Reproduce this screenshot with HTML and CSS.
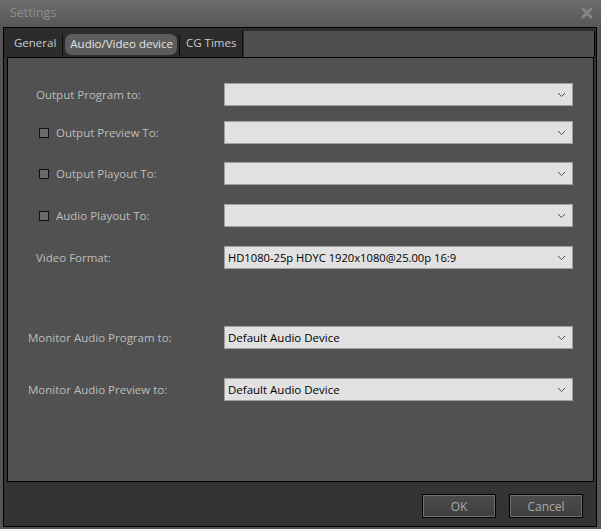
FILE: index.html
```html
<!DOCTYPE html>
<html>
<head>
<meta charset="utf-8">
<link rel="stylesheet" href="styles.css">
</head>
<body>
<div class="window">
  <div class="titlebar">
    <span class="title">Settings</span>
    <svg class="close" width="12" height="12" viewBox="0 0 12 12"><path d="M2 2 L10 10 M10 2 L2 10" stroke="#858585" stroke-width="3" stroke-linecap="round"/></svg>
  </div>
  <div class="client">
    <div class="tabbar">
      <div class="tabs">
        <div class="tab">General</div>
        <div class="sep"></div>
        <div class="tab active">Audio/Video device</div>
        <div class="sep"></div>
        <div class="tab">CG Times</div>
        <div class="sep"></div>
      </div>
      <div class="filler"></div>
    </div>
    <div class="panel">
      <div class="row">
        <div class="label">Output Program to:</div>
        <div class="select"><span></span><svg class="chev" width="9" height="6" viewBox="0 0 9 6"><path d="M1 1 L4.5 4.5 L8 1" fill="none" stroke="#505050" stroke-width="1"/></svg></div>
      </div>
      <div class="row">
        <div class="label check"><span class="box"></span>Output Preview To:</div>
        <div class="select"><span></span><svg class="chev" width="9" height="6" viewBox="0 0 9 6"><path d="M1 1 L4.5 4.5 L8 1" fill="none" stroke="#505050" stroke-width="1"/></svg></div>
      </div>
      <div class="row">
        <div class="label check"><span class="box"></span>Output Playout To:</div>
        <div class="select"><span></span><svg class="chev" width="9" height="6" viewBox="0 0 9 6"><path d="M1 1 L4.5 4.5 L8 1" fill="none" stroke="#505050" stroke-width="1"/></svg></div>
      </div>
      <div class="row">
        <div class="label check"><span class="box"></span>Audio Playout To:</div>
        <div class="select"><span></span><svg class="chev" width="9" height="6" viewBox="0 0 9 6"><path d="M1 1 L4.5 4.5 L8 1" fill="none" stroke="#505050" stroke-width="1"/></svg></div>
      </div>
      <div class="row">
        <div class="label">Video Format:</div>
        <div class="select"><span class="narrow">HD1080-25p HDYC 1920x1080@25.00p 16:9</span><svg class="chev" width="9" height="6" viewBox="0 0 9 6"><path d="M1 1 L4.5 4.5 L8 1" fill="none" stroke="#505050" stroke-width="1"/></svg></div>
      </div>
      <div class="row">
        <div class="label wide">Monitor Audio Program to:</div>
        <div class="select"><span>Default Audio Device</span><svg class="chev" width="9" height="6" viewBox="0 0 9 6"><path d="M1 1 L4.5 4.5 L8 1" fill="none" stroke="#505050" stroke-width="1"/></svg></div>
      </div>
      <div class="row">
        <div class="label wide">Monitor Audio Preview to:</div>
        <div class="select"><span>Default Audio Device</span><svg class="chev" width="9" height="6" viewBox="0 0 9 6"><path d="M1 1 L4.5 4.5 L8 1" fill="none" stroke="#505050" stroke-width="1"/></svg></div>
      </div>
    </div>
    <div class="footer">
      <button class="btn">OK</button>
      <button class="btn">Cancel</button>
    </div>
  </div>
</div>
</body>
</html>
```

FILE: styles.css
```css
* { box-sizing: border-box; }
html, body { margin: 0; padding: 0; }
body {
  width: 601px;
  height: 529px;
  background: #555555;
  font-family: "Open Sans", "Noto Sans", sans-serif;
  font-size: 11.5px;
  overflow: hidden;
}
.window {
  display: flex;
  flex-direction: column;
  height: 529px;
}
.titlebar {
  height: 27px;
  background: linear-gradient(#6c6c6c, #575757);
  display: flex;
  align-items: center;
  justify-content: space-between;
  padding: 0 8px 2px 10px;
}
.title {
  color: #8e8e8e;
  font-size: 12.5px;
}
.close { display: block; margin-top: 1px; }
.client {
  margin: 0 4px 0 3px;
  height: 500px;
  border: 1px solid #000;
  background: #333333;
  display: flex;
  flex-direction: column;
}
.tabbar {
  height: 29px;
  display: flex;
  background: #2c2c2c;
}
.tabs {
  display: flex;
  align-items: flex-end;
  padding-left: 4px;
}
.tab {
  color: #c9cdd2;
  height: 23px;
  line-height: 21px;
  padding: 0 6px;
  margin-bottom: 2px;
}
.tab.active {
  background: #5c5c5c;
  border-radius: 7px;
  color: #e4e4e4;
  margin: 0 2px 2px 2px;
  padding: 0 4px 0 5px;
  height: 21px;
  line-height: 20px;
}
.sep {
  width: 1px;
  height: 22px;
  background: #0c0c0c;
}
.tabs .sep:last-child { height: 26px; }
.filler {
  flex: 1;
  margin: 3px 1px 0 1px;
  background: #4f4f4f;
  border-right: 1px solid #000;
}
.panel {
  margin: 0 2px 0 3px;
  height: 425px;
  border: 1px solid #000;
  background: #515151;
  display: flex;
  flex-direction: column;
  padding-top: 25px;
}
.row {
  display: flex;
  align-items: center;
  height: 23px;
}
.row:nth-child(2) { margin-top: 15px; }
.row:nth-child(3) { margin-top: 18px; }
.row:nth-child(4) { margin-top: 19px; }
.row:nth-child(5) { margin-top: 19px; }
.row:nth-child(6) { margin-top: 57px; }
.row:nth-child(7) { margin-top: 29px; }
.label {
  width: 216px;
  padding-left: 28px;
  color: #bdbdbd;
  display: flex;
  align-items: center;
}
.label.wide { padding-left: 20px; }
.label.check { padding-left: 31px; }
.box {
  width: 10px;
  height: 10px;
  border: 1px solid #111;
  background: #6a6a6a;
  margin-right: 7px;
}
.select {
  width: 349px;
  height: 23px;
  border: 1px solid #a0a0a0;
  background: #e1e1e1;
  display: flex;
  align-items: center;
  justify-content: space-between;
  padding: 0 6px 0 3px;
  color: #000;
}
.narrow { font-size: 11.2px; }
.chev { display: block; }
.footer {
  flex: 1;
  display: flex;
  justify-content: flex-end;
  align-items: flex-start;
  gap: 13px;
  padding: 12px 13px 0 0;
}
.btn {
  width: 74px;
  height: 24px;
  border: 1px solid #000;
  box-shadow: inset 0 0 0 1px #6e6e6e;
  background: linear-gradient(#4c4c4c, #3e3e3e);
  color: #a9a9a9;
  font-family: "Open Sans", "Noto Sans", sans-serif;
  font-size: 12px;
  padding: 0;
}
```
